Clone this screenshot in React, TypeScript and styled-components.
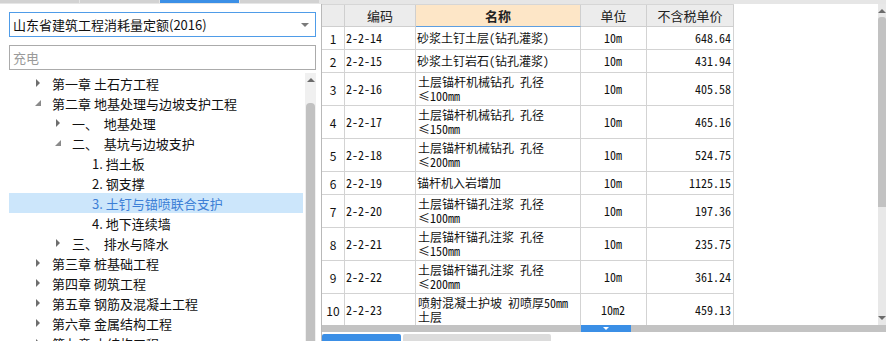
import styled, { createGlobalStyle } from "styled-components";

const GlobalStyle = createGlobalStyle`
  html, body {
    margin: 0;
    padding: 0;
    background: #ffffff;
    overflow: hidden;
  }
  body {
    font-family: "Noto Sans CJK SC", "Noto Sans", sans-serif;
    color: #000;
  }
`;

const UI = `"Noto Sans CJK SC", "Noto Sans", sans-serif`;
const GRID_FONT = `"Noto Sans Mono CJK SC", "Liberation Mono", "Noto Sans CJK SC", monospace`;

const Page = styled.div`
  width: 886px;
  height: 341px;
  display: flex;
  flex-direction: column;
  overflow: hidden;
`;

const TopStrip = styled.div`
  height: 4px;
  flex: none;
  display: flex;
  gap: 1px;
  background: #e6e6e6;
`;

const StripTab = styled.div<{ $active?: boolean }>`
  width: 79px;
  height: 3px;
  background: ${(p) => (p.$active ? "#3b8fe6" : "#d2d2d2")};
`;

const Main = styled.div`
  flex: 1;
  display: flex;
  min-height: 0;
`;

/* ---------- left side ---------- */

const LeftPanel = styled.div`
  width: 322px;
  flex: none;
  border-right: 1px solid #b9b9b9;
  display: flex;
  flex-direction: column;
  padding: 8px 0 0 9px;
  box-sizing: border-box;
  background: #fff;
`;

const Select = styled.div`
  width: 307px;
  height: 25px;
  box-sizing: border-box;
  border: 1px solid #4f9ce8;
  display: flex;
  align-items: center;
  justify-content: space-between;
  padding: 0 6px 0 3px;
  font: 13px ${UI};
  color: #111;
`;

const Caret = styled.span`
  width: 0;
  height: 0;
  border-left: 4px solid transparent;
  border-right: 4px solid transparent;
  border-top: 4px solid #7a7a7a;
`;

const Search = styled.div`
  margin-top: 8px;
  width: 307px;
  height: 25px;
  box-sizing: border-box;
  border: 1px solid #ababab;
  display: flex;
  align-items: center;
  padding-left: 3px;
  font: 13px ${UI};
  color: #9a9a9a;
`;

const TreeArea = styled.div`
  margin-top: 3px;
  flex: 1;
  display: flex;
  gap: 2px;
  min-height: 0;
  overflow: hidden;
`;

const TreeList = styled.div`
  width: 294px;
  flex: none;
`;

const TreeRow = styled.div<{ $level: number; $selected?: boolean }>`
  height: 20px;
  display: flex;
  align-items: center;
  padding-left: ${(p) => 21 + p.$level * 20}px;
  background: ${(p) => (p.$selected ? "#cce6fb" : "transparent")};
  color: ${(p) => (p.$selected ? "#3d7fd6" : "#111")};
  font: 13px ${UI};
  white-space: pre;
`;

const Toggle = styled.span`
  width: 16px;
  height: 20px;
  margin-right: 6px;
  display: flex;
  align-items: center;
  justify-content: center;
  flex: none;
`;

const TreeScroll = styled.div`
  width: 11px;
  flex: none;
  background: #f0f0f0;
  display: flex;
  flex-direction: column;
  align-items: center;
`;

const ScrollArrow = styled.div<{ $down?: boolean }>`
  margin: ${(p) => (p.$down ? "auto 0 5px" : "5px 0 0")};
  width: 0;
  height: 0;
  border-left: 4px solid transparent;
  border-right: 4px solid transparent;
  ${(p) =>
    p.$down ? "border-top: 4px solid #6b6b6b;" : "border-bottom: 4px solid #6b6b6b;"}
`;

const TreeThumb = styled.div`
  margin-top: 21px;
  width: 9px;
  flex: 1;
  background: #c1c1c1;
  border-radius: 4px 4px 0 0;
  margin-bottom: -10px;
`;

/* ---------- right side ---------- */

const GridPanel = styled.div`
  flex: 1;
  display: flex;
  flex-direction: column;
  min-width: 0;
`;

const GridBody = styled.div`
  flex: 1;
  display: flex;
  min-height: 0;
`;

const Table = styled.div`
  flex: 1;
  display: flex;
  flex-direction: column;
  overflow: hidden;
  background: #fff;
`;

const COLS = "23px 71px 165px 66px 87px";

const HeaderRow = styled.div`
  display: grid;
  grid-template-columns: ${COLS};
  height: 23px;
  flex: none;
  width: 412px;
  background: #ececec;
  border-top: 1px solid #d6d6d6;
  box-sizing: border-box;
`;

const HeaderCell = styled.div<{ $sorted?: boolean }>`
  display: flex;
  align-items: center;
  justify-content: center;
  font: ${(p) => (p.$sorted ? "bold" : "normal")} 13px ${UI};
  color: #222;
  border-right: 1px solid #cfcfcf;
  border-bottom: 1px solid ${(p) => (p.$sorted ? "#5d9ee0" : "#cfcfcf")};
  background: ${(p) => (p.$sorted ? "#fde6c7" : "transparent")};
`;

const Row = styled.div<{ $tall: boolean }>`
  display: grid;
  grid-template-columns: ${COLS};
  width: 412px;
  height: ${(p) => (p.$tall ? 33 : 23)}px;
  flex: none;
`;

const Cell = styled.div<{ $align?: "left" | "center" | "right"; $top?: boolean }>`
  display: flex;
  flex-direction: column;
  justify-content: ${(p) => (p.$top ? "flex-start" : "center")};
  align-items: ${(p) =>
    p.$align === "center" ? "center" : p.$align === "right" ? "flex-end" : "flex-start"};
  padding: ${(p) => (p.$top ? "2px 2px 0 2px" : "0 2px 0 1px")};
  border-right: 1px solid #d3d3d3;
  border-bottom: 1px solid #d3d3d3;
  font: 12px ${GRID_FONT};
  line-height: 14px;
  color: #111;
  overflow: hidden;
  white-space: nowrap;
`;

const NameLine = styled.span`
  display: block;
  height: 14px;
  line-height: 14px;
`;

const IndexCell = styled(Cell)`
  font: 12px ${UI};
  padding: 0;
`;

const VScroll = styled.div`
  width: 8px;
  flex: none;
  background: #e8e8e8;
  display: flex;
  flex-direction: column;
  align-items: center;
`;

const VThumb = styled.div`
  margin-top: 4px;
  width: 8px;
  height: 190px;
  background: #c2c2c2;
  border-radius: 3px 3px 0 0;
`;

const HScroll = styled.div`
  height: 7px;
  flex: none;
  background: #c3c3c3;
  display: flex;
`;

const HMarker = styled.div`
  margin-left: 259px;
  width: 50px;
  background: #3b8fe6;
  display: flex;
  justify-content: center;
  align-items: center;
`;

const MiniDown = styled.span`
  width: 0;
  height: 0;
  border-left: 3px solid transparent;
  border-right: 3px solid transparent;
  border-top: 3px solid #fff;
`;

const BottomTabs = styled.div`
  height: 8px;
  flex: none;
  display: flex;
  align-items: flex-end;
  gap: 2px;
  padding-top: 1px;
`;

const BottomTab = styled.div<{ $active?: boolean; $w: number }>`
  width: ${(p) => p.$w}px;
  height: 7px;
  background: ${(p) => (p.$active ? "#3b8fe6" : "#dcdcdc")};
  border-radius: 2px 2px 0 0;
`;

type Node = { level: number; text: string; arrow?: "open" | "closed"; selected?: boolean };

const tree: Node[] = [
  { level: 0, text: "第一章 土石方工程", arrow: "closed" },
  { level: 0, text: "第二章 地基处理与边坡支护工程", arrow: "open" },
  { level: 1, text: "一、  地基处理", arrow: "closed" },
  { level: 1, text: "二、  基坑与边坡支护", arrow: "open" },
  { level: 2, text: "1. 挡土板" },
  { level: 2, text: "2. 钢支撑" },
  { level: 2, text: "3. 土钉与锚喷联合支护", selected: true },
  { level: 2, text: "4. 地下连续墙" },
  { level: 1, text: "三、  排水与降水", arrow: "closed" },
  { level: 0, text: "第三章 桩基础工程", arrow: "closed" },
  { level: 0, text: "第四章 砌筑工程", arrow: "closed" },
  { level: 0, text: "第五章 钢筋及混凝土工程", arrow: "closed" },
  { level: 0, text: "第六章 金属结构工程", arrow: "closed" },
  { level: 0, text: "第七章 木结构工程", arrow: "closed" },
];

const rows = [
  { code: "2-2-14", name: ["砂浆土钉土层(钻孔灌浆)"], unit: "10m", price: "648.64" },
  { code: "2-2-15", name: ["砂浆土钉岩石(钻孔灌浆)"], unit: "10m", price: "431.94" },
  { code: "2-2-16", name: ["土层锚杆机械钻孔 孔径", "≤100mm"], unit: "10m", price: "405.58" },
  { code: "2-2-17", name: ["土层锚杆机械钻孔 孔径", "≤150mm"], unit: "10m", price: "465.16" },
  { code: "2-2-18", name: ["土层锚杆机械钻孔 孔径", "≤200mm"], unit: "10m", price: "524.75" },
  { code: "2-2-19", name: ["锚杆机入岩增加"], unit: "10m", price: "1125.15" },
  { code: "2-2-20", name: ["土层锚杆锚孔注浆 孔径", "≤100mm"], unit: "10m", price: "197.36" },
  { code: "2-2-21", name: ["土层锚杆锚孔注浆 孔径", "≤150mm"], unit: "10m", price: "235.75" },
  { code: "2-2-22", name: ["土层锚杆锚孔注浆 孔径", "≤200mm"], unit: "10m", price: "361.24" },
  { code: "2-2-23", name: ["喷射混凝土护坡 初喷厚50mm", "土层"], unit: "10m2", price: "459.13" },
];

const Arrow = ({ kind }: { kind?: "open" | "closed" }) => {
  if (!kind) return <Toggle />;
  return (
    <Toggle>
      <svg width="8" height="8" viewBox="0 0 8 8">
        {kind === "closed" ? (
          <path d="M2 0 L6 4 L2 8 Z" fill="#6e6e6e" />
        ) : (
          <path d="M7 1 L7 7 L1 7 Z" fill="#8a8a8a" />
        )}
      </svg>
    </Toggle>
  );
};

export default function App() {
  return (
    <Page>
      <GlobalStyle />
      <TopStrip>
        <StripTab />
        <StripTab />
        <StripTab $active />
        <StripTab />
      </TopStrip>
      <Main>
        <LeftPanel>
          <Select>
            <span>山东省建筑工程消耗量定额(2016)</span>
            <Caret />
          </Select>
          <Search>充电</Search>
          <TreeArea>
            <TreeList>
              {tree.map((n) => (
                <TreeRow key={n.text} $level={n.level} $selected={n.selected}>
                  <Arrow kind={n.arrow} />
                  {n.text}
                </TreeRow>
              ))}
            </TreeList>
            <TreeScroll>
              <ScrollArrow />
              <TreeThumb />
            </TreeScroll>
          </TreeArea>
        </LeftPanel>

        <GridPanel>
          <GridBody>
            <Table>
              <HeaderRow>
                <HeaderCell />
                <HeaderCell>编码</HeaderCell>
                <HeaderCell $sorted>名称</HeaderCell>
                <HeaderCell>单位</HeaderCell>
                <HeaderCell>不含税单价</HeaderCell>
              </HeaderRow>
              {rows.map((r, i) => (
                <Row key={r.code} $tall={r.name.length > 1}>
                  <IndexCell $align="center">{i + 1}</IndexCell>
                  <Cell>{r.code}</Cell>
                  <Cell $top={r.name.length > 1}>
                    {r.name.map((l) => (
                      <NameLine key={l}>{l}</NameLine>
                    ))}
                  </Cell>
                  <Cell $align="center">{r.unit}</Cell>
                  <Cell $align="right">{r.price}</Cell>
                </Row>
              ))}
            </Table>
            <VScroll>
              <ScrollArrow />
              <VThumb />
              <ScrollArrow $down />
            </VScroll>
          </GridBody>
          <HScroll>
            <HMarker>
              <MiniDown />
            </HMarker>
          </HScroll>
          <BottomTabs>
            <BottomTab $active $w={79} />
            <BottomTab $w={148} />
          </BottomTabs>
        </GridPanel>
      </Main>
    </Page>
  );
}
